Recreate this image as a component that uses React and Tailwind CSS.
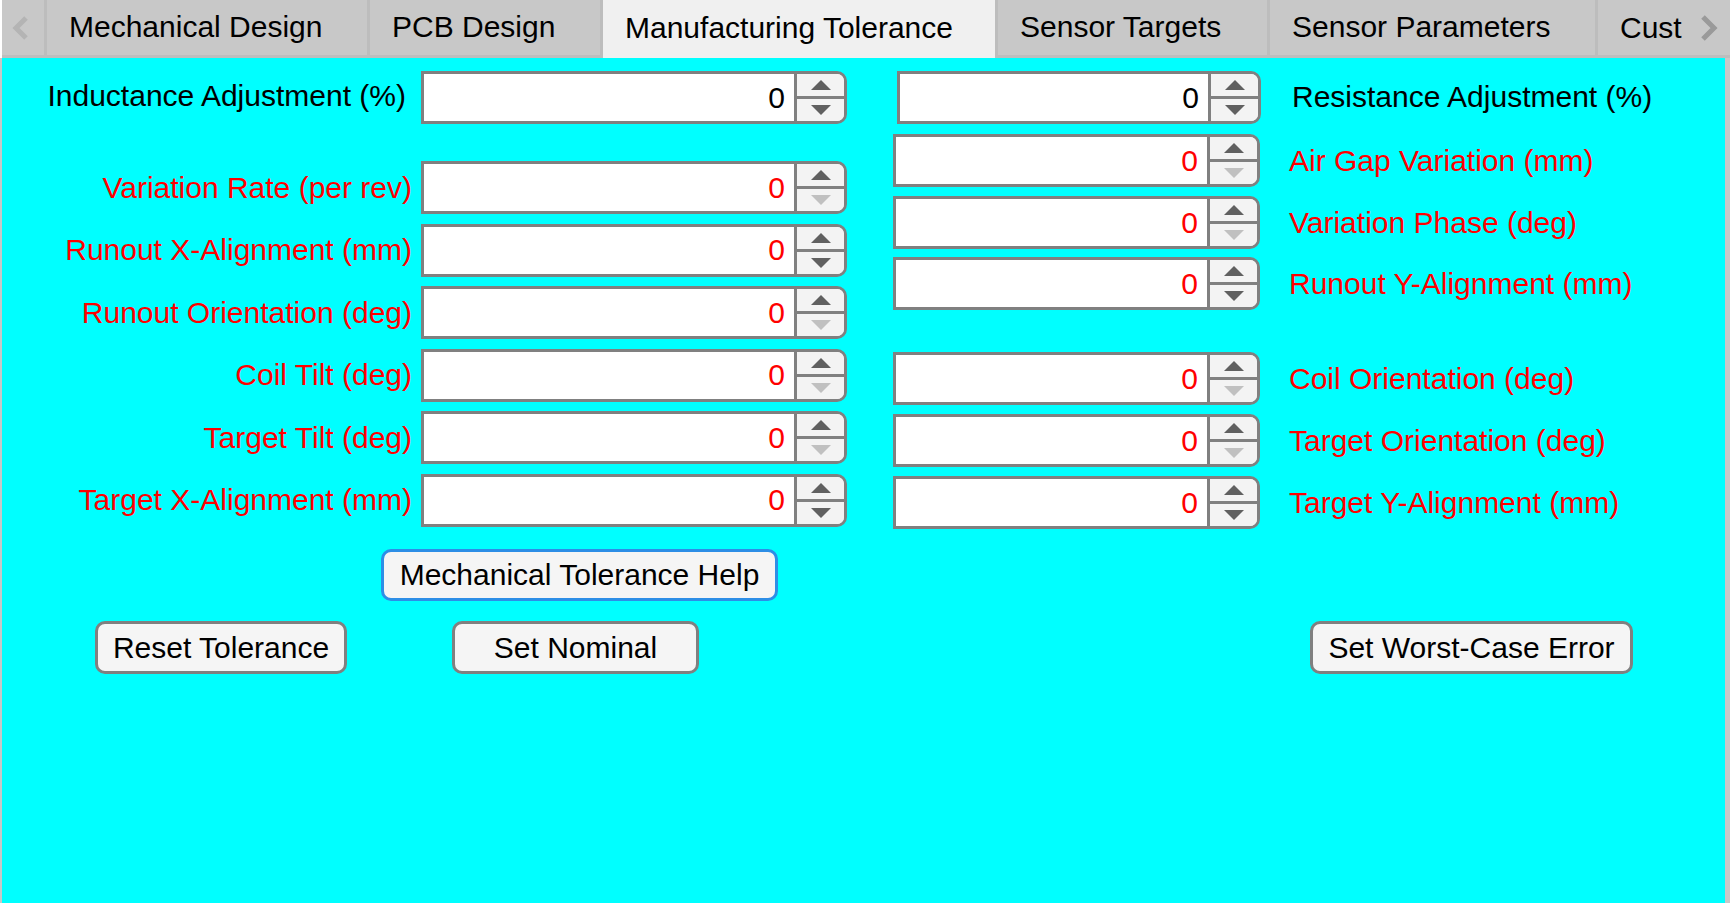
import React from 'react'

const tabs = [
  { label: 'Mechanical Design', width: 'w-[323px]' },
  { label: 'PCB Design', width: 'w-[233px]' },
  { label: 'Manufacturing Tolerance', width: 'w-[395px]', active: true },
  { label: 'Sensor Targets', width: 'w-[272px]' },
  { label: 'Sensor Parameters', width: 'w-[328px]' },
]

const leftRows = [
  { label: 'Variation Rate (per rev)', downOff: true },
  { label: 'Runout X-Alignment (mm)' },
  { label: 'Runout Orientation (deg)', downOff: true },
  { label: 'Coil Tilt (deg)', downOff: true },
  { label: 'Target Tilt (deg)', downOff: true },
  { label: 'Target X-Alignment (mm)' },
]

const rightRows = [
  { label: 'Air Gap Variation (mm)', downOff: true, mt: 'mt-[10px]' },
  { label: 'Variation Phase (deg)', downOff: true, mt: 'mt-[9px]' },
  { label: 'Runout Y-Alignment (mm)', mt: 'mt-[8px]' },
  { label: 'Coil Orientation (deg)', downOff: true, mt: 'mt-[42px]' },
  { label: 'Target Orientation (deg)', downOff: true, mt: 'mt-[9px]' },
  { label: 'Target Y-Alignment (mm)', mt: 'mt-[9px]' },
]

function Arrow({ down = false, off = false }) {
  return (
    <svg width="20" height="10" viewBox="0 0 20 10" className="block">
      <polygon
        points={down ? '0,0 20,0 10,10' : '0,10 10,0 20,10'}
        fill={off ? '#c0c0c0' : '#606060'}
      />
    </svg>
  )
}

function NumField({ value = '0', red = false, downOff = false, className = '' }) {
  return (
    <div
      className={`flex h-[53px] shrink-0 overflow-hidden rounded-r-[10px] border-[3px] border-[#808080] bg-white ${className}`}
    >
      <div
        className={`flex flex-1 items-center justify-end pr-[9px] ${red ? 'text-[#ff0000]' : 'text-black'}`}
      >
        {value}
      </div>
      <div className="flex w-[50px] flex-col border-l-[3px] border-[#808080] bg-[#f3f3f3]">
        <div className="flex flex-1 items-center justify-center border-b-[3px] border-[#808080]">
          <Arrow />
        </div>
        <div className="flex flex-1 items-center justify-center">
          <Arrow down off={downOff} />
        </div>
      </div>
    </div>
  )
}

function Button({ children, className = '', help = false }) {
  return (
    <button
      type="button"
      className={`flex items-center justify-center rounded-[10px] border-[3px] bg-[#f5f5f5] text-black ${
        help ? 'border-[#2d8ee6]' : 'border-[#808080]'
      } ${className}`}
    >
      {children}
    </button>
  )
}

function TabBar() {
  return (
    <div className="flex h-[58px] shrink-0 border-l-2 border-white bg-[#c8c8c8]">
      <div className="flex w-[45px] shrink-0 items-center justify-center border-r-[3px] border-b-[3px] border-[#bdbdbd]">
        <svg width="20" height="24" viewBox="0 0 20 24" className="-ml-[4px]">
          <polyline points="15,2 5,12 15,22" fill="none" stroke="#b4b4b4" strokeWidth="5" />
        </svg>
      </div>
      {tabs.map((tab) => (
        <div
          key={tab.label}
          className={`flex shrink-0 items-center pb-[2px] pl-[22px] whitespace-nowrap text-black ${tab.width} ${
            tab.active
              ? 'border-r-[3px] border-[#bdbdbd] bg-[#f0f0f0]'
              : 'border-r-[3px] border-b-[3px] border-[#bdbdbd]'
          }`}
        >
          {tab.label}
        </div>
      ))}
      <div className="flex flex-1 items-center justify-between border-b-[3px] border-[#bdbdbd] pl-[22px] pr-[12px] text-black">
        <span>Cust</span>
        <svg width="20" height="26" viewBox="0 0 20 26">
          <polyline points="5,2 16,13 5,24" fill="none" stroke="#9a9a9a" strokeWidth="5" />
        </svg>
      </div>
    </div>
  )
}

export default function App() {
  return (
    <div className="flex h-[903px] w-[1730px] flex-col overflow-hidden bg-[#c8c8c8] font-['Liberation_Sans',Arial,sans-serif] text-[30px] leading-none">
      <TabBar />

      <div className="ml-[2px] mr-[5px] flex flex-1 flex-col bg-[#00ffff]">
        <div className="flex items-start">
          {/* left column */}
          <div className="flex flex-col pt-[13px]">
            <div className="flex items-center">
              <div className="mb-[4px] w-[410px] pr-[6px] text-right whitespace-nowrap text-black">
                Inductance Adjustment (%)
              </div>
              <NumField className="ml-[9px] w-[426px]" />
            </div>
            <div className="mt-[37px] flex flex-col gap-[9.6px]">
              {leftRows.map((row) => (
                <div key={row.label} className="flex items-center">
                  <div className="w-[410px] text-right whitespace-nowrap text-[#ff0000]">{row.label}</div>
                  <NumField red downOff={row.downOff} className="ml-[9px] w-[426px]" />
                </div>
              ))}
            </div>
          </div>

          {/* right column */}
          <div className="ml-[46px] flex flex-col pt-[13px]">
            <div className="flex items-center">
              <NumField className="ml-[4px] w-[364px]" />
              <div className="mb-[2px] ml-[31px] whitespace-nowrap text-black">Resistance Adjustment (%)</div>
            </div>
            {rightRows.map((row) => (
              <div key={row.label} className={`flex items-center ${row.mt}`}>
                <NumField red downOff={row.downOff} className="w-[367px]" />
                <div className="ml-[29px] whitespace-nowrap text-[#ff0000]">{row.label}</div>
              </div>
            ))}
          </div>
        </div>

        <div className="mt-[20px] flex">
          <Button help className="ml-[379px] h-[52px] w-[397px]">
            Mechanical Tolerance Help
          </Button>
        </div>

        <div className="mt-[20px] flex">
          <Button className="ml-[93px] h-[53px] w-[252px]">Reset Tolerance</Button>
          <Button className="ml-[105px] h-[53px] w-[247px]">Set Nominal</Button>
          <Button className="ml-[611px] h-[53px] w-[323px]">Set Worst-Case Error</Button>
        </div>
      </div>
    </div>
  )
}
